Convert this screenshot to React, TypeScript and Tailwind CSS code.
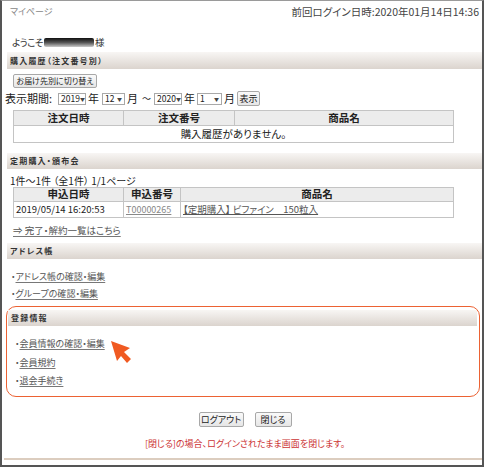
import React from "react";

const font = "[font-family:'Noto_Sans_CJK_JP','Noto_Sans',sans-serif] [font-feature-settings:'palt']";

function Header({ children, className = "" }: { children: React.ReactNode; className?: string }) {
  return (
    <div
      className={`flex items-center bg-linear-to-b from-[#f8f6f4] to-[#dbd4ce] pl-[3px] text-[8px] font-bold tracking-[1.2px] text-[#333] ${className}`}
    >
      {children}
    </div>
  );
}

function Sel({ v, w }: { v: string; w: string }) {
  return (
    <span
      className={`inline-flex items-center justify-between h-[12px] border border-[#a9a9a9] bg-white pl-[2px] pr-[2px] text-[8.5px] leading-none text-[#222] ${w}`}
    >
      <span>{v}</span>
      <span className="text-[5px] text-[#444]">▼</span>
    </span>
  );
}

function Btn({ children, className = "" }: { children: React.ReactNode; className?: string }) {
  return (
    <span
      className={`inline-flex items-center justify-center whitespace-nowrap border border-[#a8a8a8] rounded-[2px] bg-linear-to-b from-[#fafafa] to-[#e6e6e6] leading-none text-[#222] ${className}`}
    >
      {children}
    </span>
  );
}

function LinkRow({ children, className = "" }: { children: React.ReactNode; className?: string }) {
  return (
    <div className={`flex items-center h-[14px] text-[9px] text-[#555] ${className}`}>
      <span className="text-[#555]">・</span>
      <span className="underline decoration-[#777] underline-offset-2">{children}</span>
    </div>
  );
}

export default function App() {
  return (
    <div
      className={`relative w-[484px] h-[467px] bg-white border-t border-t-[#9a9a9a] border-x-2 border-b-2 border-x-[#555] border-b-[#555] overflow-hidden ${font}`}
    >
      {/* top row */}
      <div className="flex items-center justify-between h-[22px] pl-[8px] pr-[3px]">
        <span className="text-[9px] text-[#888]">マイページ</span>
        <span className="text-[10.5px] text-[#444]">前回ログイン日時:2020年01月14日14:36</span>
      </div>

      {/* welcome */}
      <div className="flex items-center h-[16px] mt-[11px] pl-[10px] text-[9.5px] tracking-[-0.5px] text-[#333]">
        <span>ようこそ</span>
        <span className="inline-block w-[50px] h-[9px] mx-[1px] rounded-[2px] bg-linear-to-b from-[#111] via-[#555] to-[#ccc] blur-[0.6px]" />
        <span>様</span>
      </div>

      {/* 購入履歴 */}
      <Header className="h-[17px] mt-[2px] ml-[5px]">購入履歴（注文番号別）</Header>

      <div className="mt-[5px] ml-[11px] flex">
        <Btn className="w-[84px] h-[14px] text-[8px]">お届け先別に切り替え</Btn>
      </div>

      <div className="mt-[3px] h-[15px] ml-[3px] flex items-center text-[11px] text-[#222]">
        <span className="w-[53px]">表示期間:</span>
        <Sel v="2019" w="w-[28px]" />
        <span className="ml-[2px]">年</span>
        <Sel v="12" w="w-[23px] ml-[3px]" />
        <span className="ml-[2px]">月</span>
        <span className="ml-[4px] text-[9px]">〜</span>
        <Sel v="2020" w="w-[28px] ml-[3px]" />
        <span className="ml-[2px]">年</span>
        <Sel v="1" w="w-[25px] ml-[2px]" />
        <span className="ml-[2px]">月</span>
        <Btn className="w-[23px] h-[15px] ml-[2px] text-[9px]">表示</Btn>
      </div>

      <table className="mt-[4px] ml-[11px] w-[441px] border-collapse text-[#222]">
        <thead>
          <tr className="h-[15px] bg-[#ececec]">
            <th className="w-[110px] border border-[#c4c4c4] p-0 text-[10.5px] font-bold leading-none">注文日時</th>
            <th className="w-[111px] border border-[#c4c4c4] p-0 text-[10.5px] font-bold leading-none">注文番号</th>
            <th className="border border-[#c4c4c4] p-0 text-[10.5px] font-bold leading-none">商品名</th>
          </tr>
        </thead>
        <tbody>
          <tr className="h-[17px]">
            <td colSpan={3} className="border border-[#c4c4c4] p-0 text-center text-[10.5px] leading-none">
              購入履歴がありません。
            </td>
          </tr>
        </tbody>
      </table>

      {/* 定期購入 */}
      <Header className="h-[16px] mt-[10px] ml-[5px]">定期購入・頒布会</Header>

      <div className="mt-[4px] h-[14px] pl-[8px] flex items-center text-[10px] text-[#222]">
        1件〜1件 （全1件） 1/1ページ
      </div>

      <table className="ml-[11px] w-[441px] border-collapse text-[#222]">
        <thead>
          <tr className="h-[14px] bg-[#ececec]">
            <th className="w-[110px] border border-[#c4c4c4] p-0 text-[10.5px] font-bold leading-none">申込日時</th>
            <th className="w-[57px] border border-[#c4c4c4] p-0 text-[10.5px] font-bold leading-none">申込番号</th>
            <th className="border border-[#c4c4c4] p-0 text-[10.5px] font-bold leading-none">商品名</th>
          </tr>
        </thead>
        <tbody>
          <tr className="h-[16px]">
            <td className="border border-[#c4c4c4] py-0 px-[2px] text-[9.5px] leading-none">2019/05/14 16:20:53</td>
            <td className="border border-[#c4c4c4] py-0 px-[2px] text-[9px] leading-none text-[#888] underline underline-offset-1">
              T00000265
            </td>
            <td className="border border-[#c4c4c4] py-0 px-[2px] text-[9.5px] leading-none text-[#555] underline underline-offset-1">
              【定期購入】 ビファイン　150粒入
            </td>
          </tr>
        </tbody>
      </table>

      <div className="mt-[4px] h-[16px] pl-[11px] flex items-center text-[9.5px] text-[#555]">
        <span className="underline decoration-[#777] underline-offset-2">⇒ 完了・解約一覧はこちら</span>
      </div>

      {/* アドレス帳 */}
      <Header className="h-[16px] mt-[5px] ml-[5px]">アドレス帳</Header>

      <LinkRow className="mt-[11px] pl-[9px]">アドレス帳の確認・編集</LinkRow>
      <LinkRow className="mt-[3px] pl-[9px]">グループの確認・編集</LinkRow>

      {/* 登録情報 */}
      <div className="mt-[5px] ml-[4px] w-[474px] h-[91px] border-[1.5px] border-[#ec6233] rounded-[10px] pt-[3px] pl-[1px] pr-[2px]">
        <Header className="h-[16px]">登録情報</Header>
        <LinkRow className="mt-[11px] pl-[7px]">会員情報の確認・編集</LinkRow>
        <LinkRow className="mt-[5px] pl-[7px]">会員規約</LinkRow>
        <LinkRow className="mt-[4px] pl-[7px]">退会手続き</LinkRow>
      </div>

      {/* buttons */}
      <div className="mt-[15px] flex justify-center gap-[11px] pl-[6px]">
        <Btn className="w-[45px] h-[15px] text-[9px]">ログアウト</Btn>
        <Btn className="w-[37px] h-[15px] text-[9px]">閉じる</Btn>
      </div>

      <div className="mt-[10px] h-[14px] flex items-center justify-center pl-[6px] text-[9px] text-[#cc3333]">
        [閉じる]の場合、ログインされたまま画面を閉じます。
      </div>

      <div className="mt-[7px] ml-[2px] h-[2px] bg-[#dccdbf]" />

      {/* cursor arrow */}
      <svg
        className="absolute left-[108px] top-[339px]"
        width="24"
        height="24"
        viewBox="0 0 24 24"
      >
        <polygon points="1,1 20,8 14,12 21,19 17,23 11,16 7,21" fill="#f05a22" />
      </svg>
    </div>
  );
}
